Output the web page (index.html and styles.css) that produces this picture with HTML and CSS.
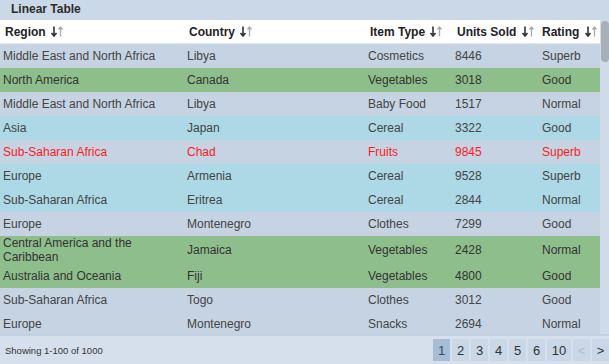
FILE: index.html
```html
<!DOCTYPE html>
<html lang="en">

<head>
    <meta charset="UTF-8">
    <title>Linear Table</title>
    <link rel="stylesheet" href="styles.css">
</head>

<body>
    <div class="panel">
        <div class="title">Linear Table</div>

        <div class="grid">
            <div class="table-wrap">
                <table>
                    <colgroup>
                        <col class="col-region">
                        <col class="col-country">
                        <col class="col-type">
                        <col class="col-units">
                        <col class="col-rating">
                    </colgroup>
                    <thead>
                        <tr>
                            <th>Region <svg class="sort" viewBox="0 0 14 12"><path class="down" d="M4 1v9M1.5 7.5L4 10.5 6.5 7.5" /><path class="up" d="M10.5 11V2M8.5 4L10.5 1.5 12.5 4" /></svg></th>
                            <th>Country <svg class="sort" viewBox="0 0 14 12"><path class="down" d="M4 1v9M1.5 7.5L4 10.5 6.5 7.5" /><path class="up" d="M10.5 11V2M8.5 4L10.5 1.5 12.5 4" /></svg></th>
                            <th>Item Type <svg class="sort" viewBox="0 0 14 12"><path class="down" d="M4 1v9M1.5 7.5L4 10.5 6.5 7.5" /><path class="up" d="M10.5 11V2M8.5 4L10.5 1.5 12.5 4" /></svg></th>
                            <th>Units Sold <svg class="sort" viewBox="0 0 14 12"><path class="down" d="M4 1v9M1.5 7.5L4 10.5 6.5 7.5" /><path class="up" d="M10.5 11V2M8.5 4L10.5 1.5 12.5 4" /></svg></th>
                            <th>Rating <svg class="sort" viewBox="0 0 14 12"><path class="down" d="M4 1v9M1.5 7.5L4 10.5 6.5 7.5" /><path class="up" d="M10.5 11V2M8.5 4L10.5 1.5 12.5 4" /></svg></th>
                        </tr>
                    </thead>
                    <tbody>
                        <tr>
                            <td>Middle East and North Africa</td><td>Libya</td><td>Cosmetics</td><td>8446</td><td>Superb</td>
                        </tr>
                        <tr class="veg">
                            <td>North America</td><td>Canada</td><td>Vegetables</td><td>3018</td><td>Good</td>
                        </tr>
                        <tr>
                            <td>Middle East and North Africa</td><td>Libya</td><td>Baby Food</td><td>1517</td><td>Normal</td>
                        </tr>
                        <tr class="cereal">
                            <td>Asia</td><td>Japan</td><td>Cereal</td><td>3322</td><td>Good</td>
                        </tr>
                        <tr class="fruit">
                            <td>Sub-Saharan Africa</td><td>Chad</td><td>Fruits</td><td>9845</td><td>Superb</td>
                        </tr>
                        <tr class="cereal">
                            <td>Europe</td><td>Armenia</td><td>Cereal</td><td>9528</td><td>Superb</td>
                        </tr>
                        <tr class="cereal">
                            <td>Sub-Saharan Africa</td><td>Eritrea</td><td>Cereal</td><td>2844</td><td>Normal</td>
                        </tr>
                        <tr>
                            <td>Europe</td><td>Montenegro</td><td>Clothes</td><td>7299</td><td>Good</td>
                        </tr>
                        <tr class="veg">
                            <td>Central America and the Caribbean</td><td>Jamaica</td><td>Vegetables</td><td>2428</td><td>Normal</td>
                        </tr>
                        <tr class="veg">
                            <td>Australia and Oceania</td><td>Fiji</td><td>Vegetables</td><td>4800</td><td>Good</td>
                        </tr>
                        <tr>
                            <td>Sub-Saharan Africa</td><td>Togo</td><td>Clothes</td><td>3012</td><td>Good</td>
                        </tr>
                        <tr>
                            <td>Europe</td><td>Montenegro</td><td>Snacks</td><td>2694</td><td>Normal</td>
                        </tr>
                    </tbody>
                </table>
            </div>
            <!-- scroller drawn by hand, headless hides the native one -->
            <div class="scrollbar"><div class="thumb"></div></div>
        </div>

        <div class="footer">
            <span class="info">Showing 1-100 of 1000</span>
            <div class="pager">
                <button class="active">1</button>
                <button>2</button>
                <button>3</button>
                <button>4</button>
                <button>5</button>
                <button>6</button>
                <button class="wide">10</button>
                <button disabled>&lt;</button>
                <button>&gt;</button>
            </div>
        </div>
    </div>
</body>

</html>
```

FILE: styles.css
```css
html,
body {
    margin: 0;
    padding: 0;
    font-family: 'Liberation Sans', Arial, sans-serif;
    color: #444;
}

.panel {
    width: 609px;
    height: 364px;
    display: flex;
    flex-direction: column;
    background: #cbd8e7;
}

.title {
    height: 20px;
    line-height: 19px;
    padding-left: 11px;
    font-size: 12px;
    font-weight: bold;
    color: #2c2c2c;
}

.grid {
    flex: 1;
    min-height: 0;
    display: flex;
    border-bottom: 2px solid #c3d1e1;
}

.table-wrap {
    flex: 1;
    overflow: hidden;
}

.scrollbar {
    width: 9px;
    padding-top: 1px;
    background: #cfdbe9;
}

.thumb {
    width: 8px;
    height: 41px;
    margin-left: 1px;
    border-radius: 4px;
    background: #a7b0b9;
}

table {
    width: 100%;
    border-collapse: collapse;
    table-layout: fixed;
    font-size: 12px;
}

.col-region { width: 184px; }
.col-country { width: 181px; }
.col-type { width: 87px; }
.col-units { width: 87px; }

th {
    height: 24px;
    padding: 0 0 0 5px;
    background: #fff;
    text-align: left;
    font-weight: bold;
    color: #222;
    white-space: nowrap;
    box-shadow: inset 0 -1px 0 #e3e9f0;
}

th:last-child {
    padding-left: 3px;
}

.sort {
    width: 14px;
    height: 13px;
    vertical-align: -2px;
    margin-left: 1px;
    fill: none;
    stroke-width: 1.3;
}

.sort .down {
    stroke: #333;
    stroke-width: 1.6;
}

.sort .up {
    stroke: #a8a8a8;
}

td {
    height: 24px;
    padding: 0 0 0 3px;
    line-height: 14px;
    vertical-align: middle;
    background: #c5d3e3;
}

tr.veg td {
    background: #8fbe8d;
    color: #333;
}

tr.cereal td {
    background: #add8e6;
}

tr.fruit td {
    color: #ff1a1a;
}

.footer {
    height: 28px;
    display: flex;
    align-items: center;
    justify-content: space-between;
    padding-left: 5px;
    background: #d5e0ec;
}

.info {
    font-size: 9.5px;
    color: #333;
}

.pager {
    display: flex;
    gap: 2px;
    align-self: flex-end;
    margin-bottom: 3px;
}

.pager button {
    min-width: 17px;
    height: 22px;
    padding: 0 3px;
    border: none;
    border-radius: 0;
    background: #cad7e6;
    font-family: inherit;
    font-size: 13px;
    color: #333;
}

.pager button.wide {
    min-width: 24px;
}

.pager button.active {
    background: #a7bdd5;
    color: #2d4a6a;
}

.pager button:disabled {
    color: #b4bcc6;
}
```
